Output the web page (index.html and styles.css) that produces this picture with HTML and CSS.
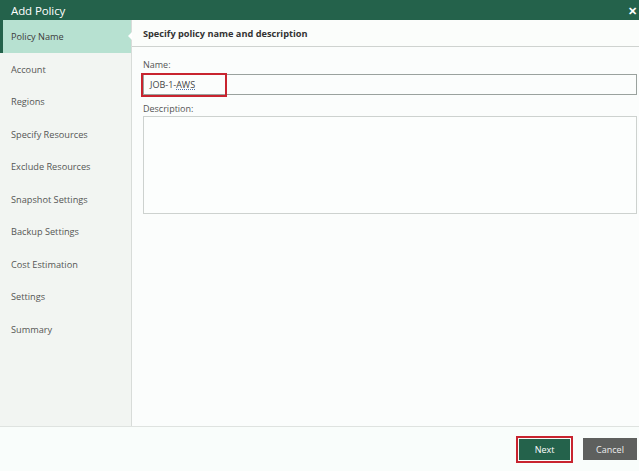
FILE: index.html
```html
<!DOCTYPE html>
<html>
<head>
<meta charset="utf-8">
<link rel="stylesheet" href="styles.css">
</head>
<body>
<div class="dialog">
  <div class="titlebar">
    <span class="title">Add Policy</span>
    <span class="close">&#x2715;</span>
  </div>
  <div class="main">
    <nav class="nav">
      <div class="nav-item active">Policy Name</div>
      <div class="nav-item">Account</div>
      <div class="nav-item">Regions</div>
      <div class="nav-item">Specify Resources</div>
      <div class="nav-item">Exclude Resources</div>
      <div class="nav-item">Snapshot Settings</div>
      <div class="nav-item">Backup Settings</div>
      <div class="nav-item">Cost Estimation</div>
      <div class="nav-item">Settings</div>
      <div class="nav-item">Summary</div>
    </nav>
    <section class="content">
      <div class="content-head">Specify policy name and description</div>
      <div class="form">
        <label class="label">Name:</label>
        <div class="input-wrap">
          <div class="input"><span class="value">JOB-1-<span class="spell">AWS</span></span></div>
          <div class="highlight name-hl"></div>
        </div>
        <label class="label desc-label">Description:</label>
        <div class="textarea"></div>
      </div>
    </section>
  </div>
  <div class="footer">
    <div class="btn-hl"><button class="btn next">Next</button></div>
    <button class="btn cancel">Cancel</button>
  </div>
</div>
</body>
</html>
```

FILE: styles.css
```css
* { box-sizing: border-box; }
html, body { margin: 0; padding: 0; }
body {
  width: 639px;
  height: 471px;
  font-family: "Open Sans", "Noto Sans", sans-serif;
  color: #4a4a4a;
  background: #f9fcfa;
  overflow: hidden;
}
.dialog {
  display: flex;
  flex-direction: column;
  height: 471px;
}
.titlebar {
  height: 20px;
  background: #24624b;
  color: #fff;
  display: flex;
  align-items: center;
  justify-content: space-between;
  padding: 0 2px 0 11px;
}
.title { font-size: 11.5px; letter-spacing: -0.1px; }
.close { font-size: 11px; font-weight: bold; line-height: 1; }
.main {
  display: flex;
  height: 407px;
  border-bottom: 1px solid #dfe3e0;
}
.nav {
  width: 132px;
  background: #f2f5f2;
  border-right: 1px solid #d8dcd9;
  display: flex;
  flex-direction: column;
}
.nav-item {
  height: 32.5px;
  display: flex;
  align-items: center;
  padding-left: 11px;
  font-size: 9.2px;
  color: #555;
  flex-shrink: 0;
}
.nav-item.active {
  height: 33px;
  background: #b7e1d1;
  border-left: 3px solid #24624b;
  padding-left: 8px;
  color: #3c3c3c;
  position: relative;
}
.nav-item.active::after {
  content: "";
  position: absolute;
  right: -1px;
  top: 12px;
  border-style: solid;
  border-width: 4px 4px 4px 0;
  border-color: transparent #fff transparent transparent;
}
.content {
  flex: 1;
  background: #fbfdfc;
  display: flex;
  flex-direction: column;
}
.content-head {
  height: 27px;
  display: flex;
  align-items: center;
  padding-left: 11px;
  font-size: 9.2px;
  font-weight: bold;
  color: #333;
  background: #fbfdfb;
  border-bottom: 1px solid #cfd3d0;
}
.form {
  padding: 12px 2px 0 11px;
  display: flex;
  flex-direction: column;
}
.label {
  font-size: 9px;
  color: #555;
  line-height: 12px;
  height: 15px;
}
.input-wrap { position: relative; }
.input {
  height: 21px;
  border: 1px solid #9aa29e;
  background: #fbfdfc;
  display: flex;
  align-items: center;
  padding-left: 6px;
  font-size: 9px;
  color: #444;
}
.spell {
  text-decoration: underline dotted #5577aa;
}
.highlight {
  position: absolute;
  border: 2px solid #c8242f;
}
.name-hl {
  left: -2px;
  top: -1px;
  width: 86px;
  height: 24px;
}
.desc-label { margin-top: 8px; height: 13px; }
.textarea {
  height: 98px;
  border: 1px solid #cdd2cf;
  background: #fcfefd;
}
.footer {
  flex: 1;
  background: #f9fdfb;
  display: flex;
  align-items: center;
  justify-content: flex-end;
  padding: 0 2px 0 0;
  gap: 10px;
}
.btn-hl {
  border: 2px solid #c8242f;
  padding: 1px;
  display: flex;
}
.btn {
  border: none;
  font-family: "Open Sans", "Noto Sans", sans-serif;
  font-size: 9px;
  color: #fff;
  height: 21px;
  padding: 0;
  margin: 0;
}
.next {
  width: 51px;
  background: #24624b;
}
.cancel {
  width: 54px;
  height: 22px;
  background: #5e605e;
  color: #eee;
}
```
